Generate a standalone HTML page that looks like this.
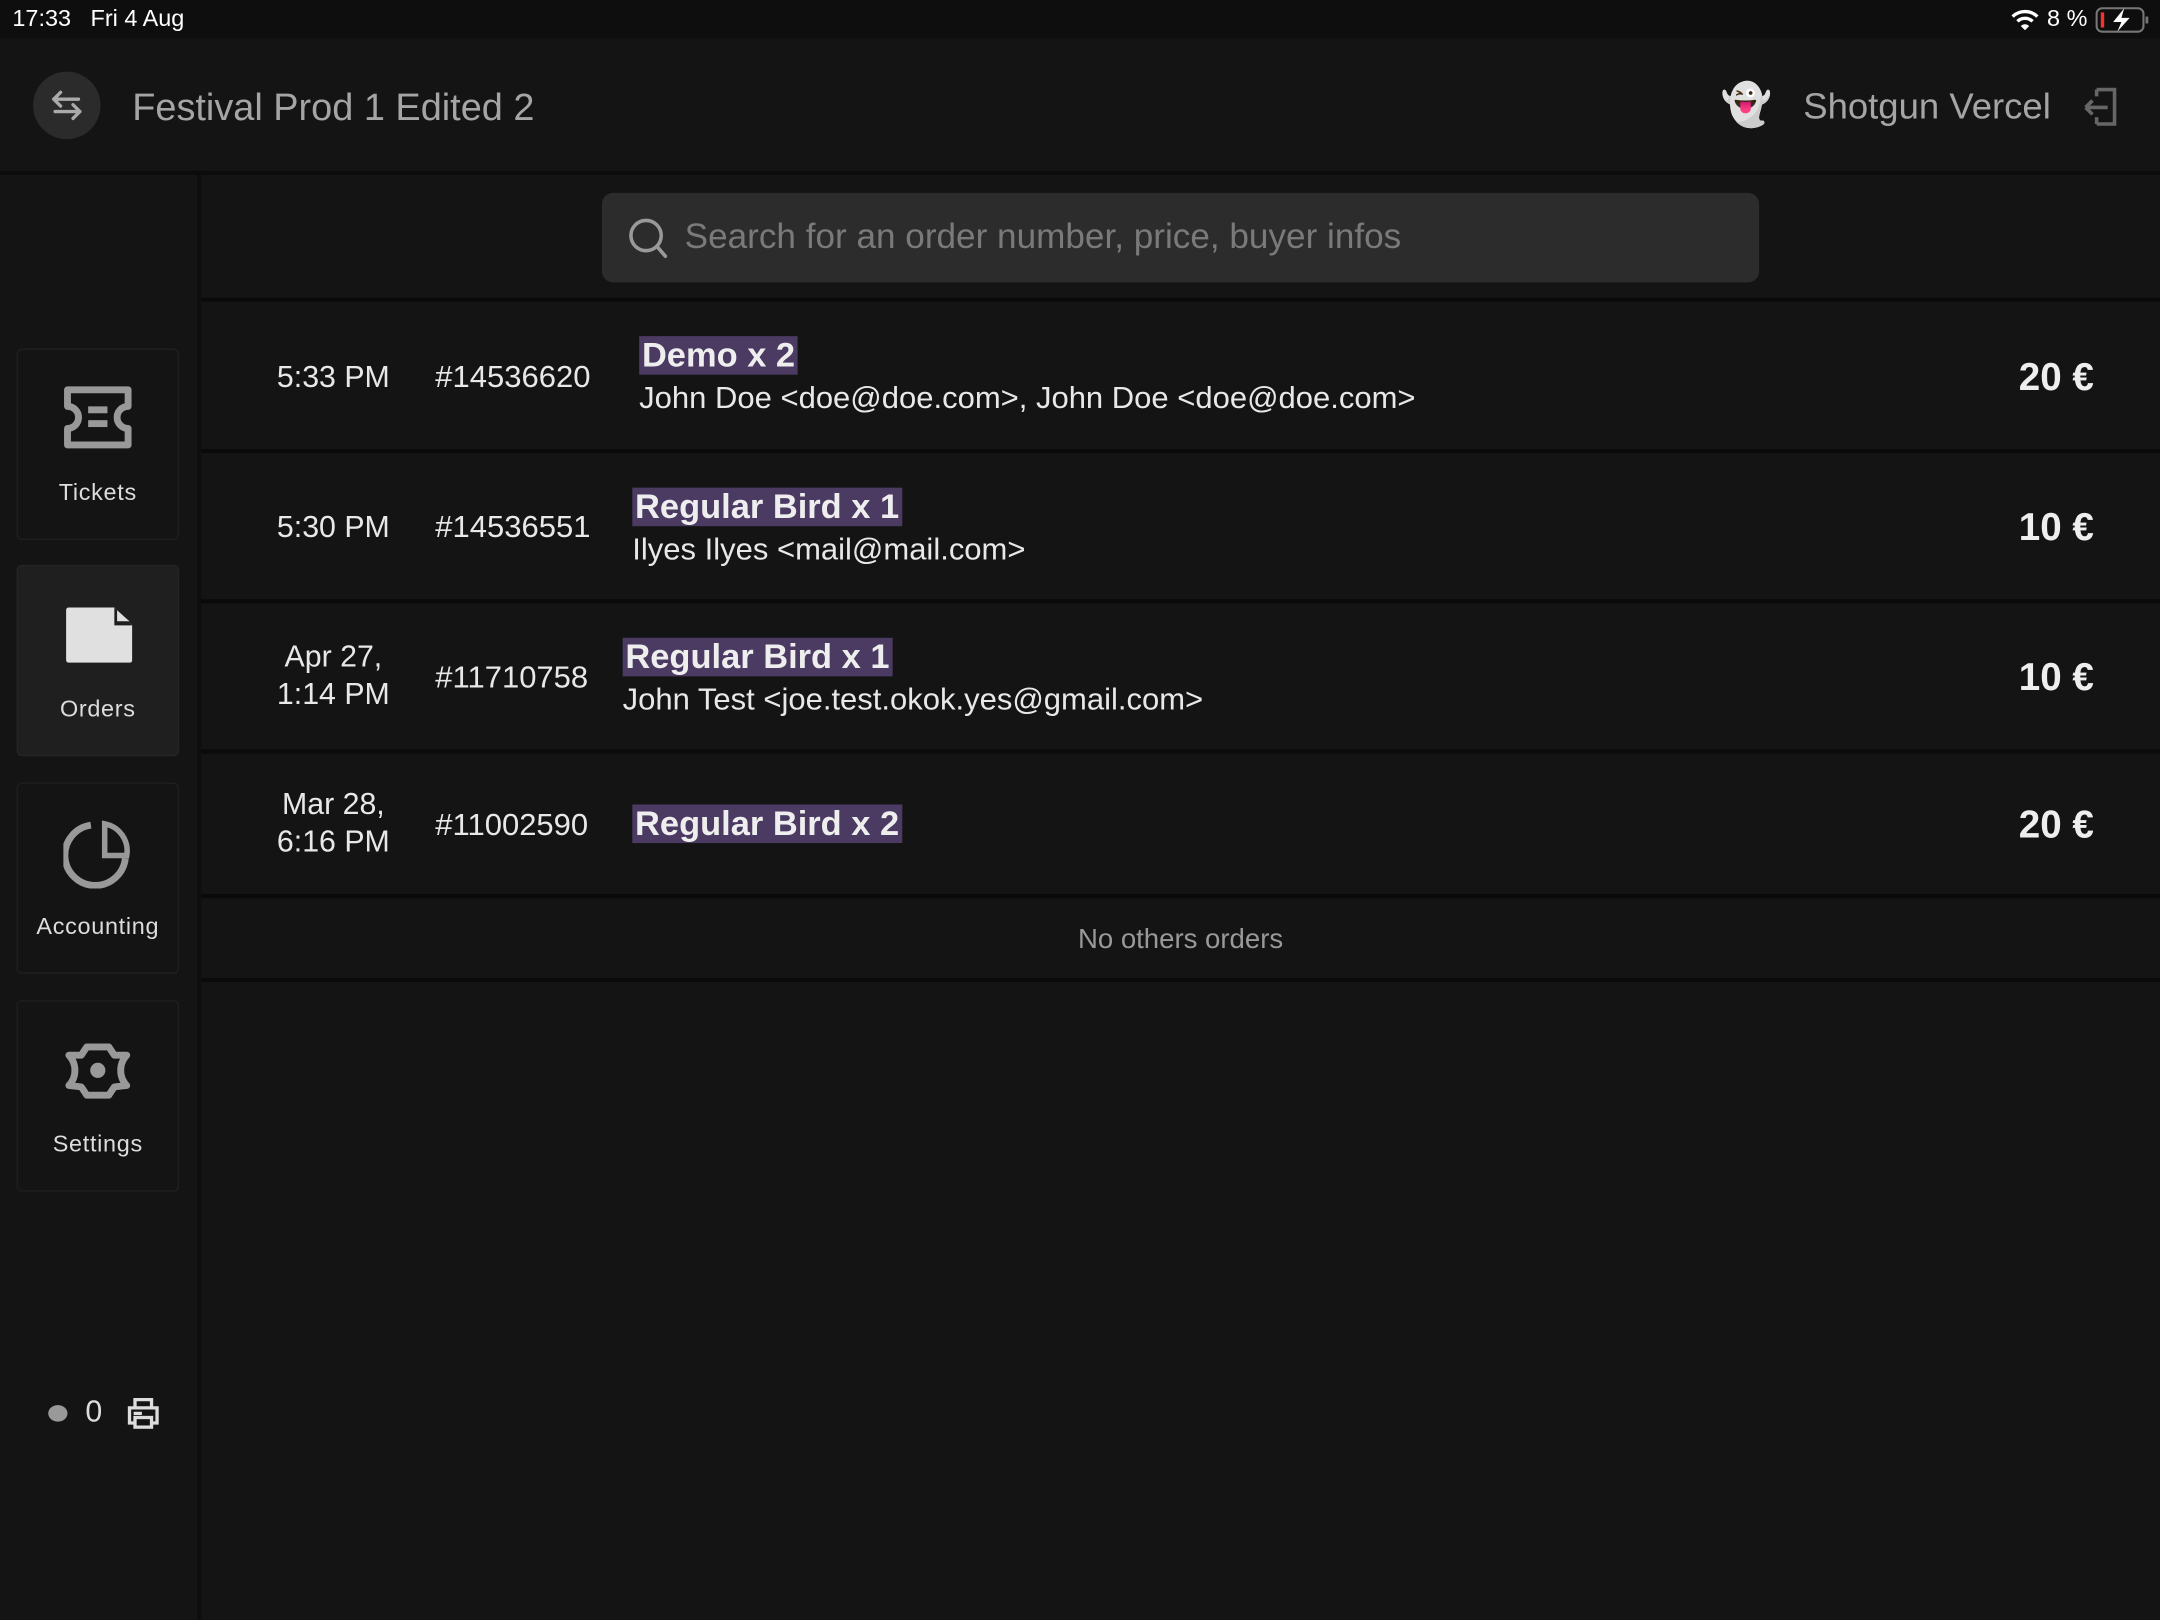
<!DOCTYPE html>
<html><head><meta charset="utf-8"><style>
html,body{margin:0;padding:0;background:#141414;overflow:hidden;width:2160px;height:1620px}
#w{position:absolute;left:0;top:0;width:1568px;height:1176px;transform:scale(1.377551);transform-origin:0 0;font-family:"Liberation Sans",sans-serif;color:#e6e6e6;background:#141414}
.a{position:absolute}
.status{left:0;top:0;width:1568px;height:28px;background:#0e0e0e;font-size:17px;color:#fff}
.hdr{left:0;top:28px;width:1568px;height:96px;background:#141414;border-bottom:3px solid #0c0c0c}
.side{left:0;top:127px;width:143px;height:1049px;background:#141414;border-right:3px solid #0e0e0e}
.card{position:absolute;left:12px;width:116px;height:137px;border:1px solid #1f1f1f;border-radius:4px;text-align:center;font-size:17px;color:#ddd;letter-spacing:.5px}
.card svg{position:absolute;left:33px;top:26px}
.card span{position:absolute;left:0;right:0;top:94px}
.line{left:146px;width:1422px;height:3px;background:#0a0a0a}
.row{left:146px;width:1422px}
.t{position:absolute;width:120px;left:36px;text-align:center;font-size:22px;color:#e8e8e8;line-height:27px}
.id{position:absolute;left:170px;font-size:22.5px;color:#e8e8e8}
.hl{background:#4b3a62;font-weight:bold;font-size:25px;padding:0 2px;color:#eee}
.sub{font-size:22.5px;color:#e8e8e8;line-height:32px}
.pr{position:absolute;right:48px;font-weight:bold;font-size:28px;color:#eee}
</style></head><body><div id="w">
<div class="a status"><span class="a" style="left:9px;top:4px">17:33&nbsp;&nbsp; Fri 4 Aug</span>
<svg class="a" style="left:1459px;top:6px" width="22" height="16" viewBox="0 0 22 16"><path d="M2 6 A13 13 0 0 1 20 6" stroke="#fff" stroke-width="2.4" fill="none"/><path d="M5.5 9.5 A8 8 0 0 1 16.5 9.5" stroke="#fff" stroke-width="2.4" fill="none"/><path d="M8 13 L11 16 L14 13 A4 4 0 0 0 8 13Z" fill="#fff"/></svg>
<span class="a" style="left:1486px;top:4px">8 %</span>
<svg class="a" style="left:1521px;top:5px" width="40" height="19" viewBox="0 0 40 19"><rect x="1" y="1" width="34" height="17" rx="4" stroke="#777" stroke-width="1.5" fill="none"/><rect x="4" y="4" width="2.5" height="11" fill="#e33"/><rect x="36.5" y="7" width="2" height="5" fill="#777"/><path d="M21 1 L13 11 H19 L16 18 L25 8 H19Z" fill="#fff"/></svg>
</div>
<div class="a hdr">
<div class="a" style="left:24px;top:24px;width:49px;height:49px;border-radius:50%;background:#2b2b2b"></div>
<svg class="a" style="left:35px;top:35px" width="27" height="27" viewBox="0 0 27 27" fill="none" stroke="#aaa" stroke-width="2.4" stroke-linecap="round" stroke-linejoin="round"><path d="M4 9 H22 M4 9 L9 4 M4 9 L9 14 M23 18 H5 M23 18 L18 13 M23 18 L18 23"/></svg>
<span class="a" style="left:96px;top:34px;font-size:27.5px;color:#a5a5a5">Festival Prod 1 Edited 2</span>
<span class="a" style="left:1249px;top:31px;font-size:30px">👻</span>
<span class="a" style="left:1309px;top:34px;font-size:26.5px;color:#a5a5a5">Shotgun Vercel</span>
<svg class="a" style="left:1510px;top:33px" width="32" height="32" viewBox="0 0 32 32" fill="none" stroke="#666" stroke-width="2.6"><path d="M12 4 H25 V29 H12 M12 4 V9 M12 29 V24"/><path d="M20 17 H4 M4 17 L9 12 M4 17 L9 22" stroke-linejoin="round"/></svg>
</div>
<div class="a side">
<div class="card" style="top:126px"><svg width="50" height="46" viewBox="0 0 50 46"><path d="M3 3 H47 V15 A7 7 0 0 0 47 31 V43 H3 V31 A7 7 0 0 0 3 15Z" stroke="#999" stroke-width="5" fill="none" stroke-linejoin="round"/><rect x="18" y="15" width="14" height="5" fill="#999"/><rect x="18" y="25" width="14" height="5" fill="#999"/></svg><span>Tickets</span></div>
<div class="card" style="top:283px;background:#1f1f1f;border-color:#252525"><svg width="50" height="50" viewBox="0 0 50 50"><path d="M2 6 Q2 4 4 4 H37 L50 17 V42 Q50 44 48 44 H4 Q2 44 2 42Z" fill="#e0e0e0"/><path d="M37 4 V17 H50" fill="#1f1f1f"/><path d="M39 6 L48 14 H39Z" fill="#e0e0e0"/></svg><span>Orders</span></div>
<div class="card" style="top:441px"><svg width="50" height="50" viewBox="0 0 50 50" fill="none" stroke="#999" stroke-width="5"><path d="M20 4 A22 22 0 1 0 45 28"/><path d="M30 3 V26 H46 A20 20 0 0 0 30 3Z" stroke-width="4"/></svg><span>Accounting</span></div>
<div class="card" style="top:599px"><svg width="50" height="50" viewBox="0 0 50 50" fill="none" stroke="#999" stroke-width="5" stroke-linejoin="round"><path d="M17 3 H33 L37 9 L46 9 A16 16 0 0 0 46 31 L37 32 L33 38 H17 L13 32 L4 31 A16 16 0 0 0 4 9 L13 9Z" transform="translate(0,4)"/><circle cx="25" cy="24" r="3" fill="#999"/></svg><span>Settings</span></div>
<div class="a" style="left:35px;top:893px;width:14px;height:12px;border-radius:50%;background:#999"></div>
<span class="a" style="left:62px;top:885px;font-size:22px;color:#ddd">0</span>
<svg class="a" style="left:91px;top:886px" width="26" height="26" viewBox="0 0 26 26" fill="none" stroke="#ddd" stroke-width="2.4"><path d="M7 8 V3 H19 V8 M7 20 H3 V9 H23 V20 H19"/><rect x="7" y="16" width="12" height="7"/><path d="M6 13 H12"/></svg>
</div>
<div class="a" style="left:437px;top:140px;width:840px;height:65px;background:#2c2c2c;border-radius:8px"></div>
<svg class="a" style="left:455px;top:157px" width="32" height="32" viewBox="0 0 32 32" fill="none" stroke="#999" stroke-width="2.6"><circle cx="14" cy="14" r="11"/><path d="M22 22 L28 29" stroke-linecap="round"/></svg>
<span class="a" style="left:497px;top:158px;font-size:25.5px;color:#7a7a7a">Search for an order number, price, buyer infos</span>
<div class="a line" style="top:216px"></div>
<div class="a row" style="top:219px;height:107px"><div class="t" style="top:41px">5:33 PM</div><div class="id" style="top:42px">#14536620</div><div class="a" style="left:318px;top:25px"><span class="hl">Demo x 2</span><br><span class="sub">John Doe &lt;doe@doe.com&gt;, John Doe &lt;doe@doe.com&gt;</span></div><div class="pr" style="top:39px">20 €</div></div>
<div class="a line" style="top:326px"></div>
<div class="a row" style="top:329px;height:106px"><div class="t" style="top:40px">5:30 PM</div><div class="id" style="top:41px">#14536551</div><div class="a" style="left:313px;top:25px"><span class="hl">Regular Bird x 1</span><br><span class="sub">Ilyes Ilyes &lt;mail@mail.com&gt;</span></div><div class="pr" style="top:38px">10 €</div></div>
<div class="a line" style="top:435px"></div>
<div class="a row" style="top:438px;height:106px"><div class="t" style="top:25px">Apr 27,<br>1:14 PM</div><div class="id" style="top:41px">#11710758</div><div class="a" style="left:306px;top:25px"><span class="hl">Regular Bird x 1</span><br><span class="sub">John Test &lt;joe.test.okok.yes@gmail.com&gt;</span></div><div class="pr" style="top:38px">10 €</div></div>
<div class="a line" style="top:544px"></div>
<div class="a row" style="top:547px;height:102px"><div class="t" style="top:23px">Mar 28,<br>6:16 PM</div><div class="id" style="top:39px">#11002590</div><div class="a" style="left:313px;top:37px"><span class="hl">Regular Bird x 2</span></div><div class="pr" style="top:36px">20 €</div></div>
<div class="a line" style="top:649px"></div>
<div class="a" style="left:146px;width:1422px;top:671px;text-align:center;font-size:20px;color:#999">No others orders</div>
<div class="a line" style="top:710px"></div>
</div></body></html>
